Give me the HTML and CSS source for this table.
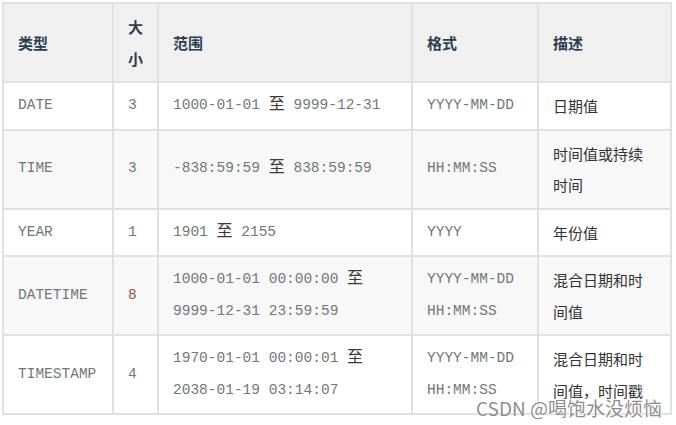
FILE: index.html
```html
<!DOCTYPE html>
<html lang="zh">
<head>
<meta charset="utf-8">
<link rel="stylesheet" href="styles.css">
</head>
<body>
<div class="page">
  <table class="types">
    <colgroup>
      <col class="c1"><col class="c2"><col class="c3"><col class="c4"><col class="c5">
    </colgroup>
    <thead>
      <tr><th>类型</th><th>大小</th><th>范围</th><th>格式</th><th>描述</th></tr>
    </thead>
    <tbody>
      <tr><td class="mono">DATE</td><td class="mono">3</td><td class="mono">1000-01-01 <span class="to">至</span> 9999-12-31</td><td class="mono">YYYY-MM-DD</td><td class="desc">日期值</td></tr>
      <tr><td class="mono">TIME</td><td class="mono">3</td><td class="mono">-838:59:59 <span class="to">至</span> 838:59:59</td><td class="mono">HH:MM:SS</td><td class="desc">时间值或持续时间</td></tr>
      <tr><td class="mono">YEAR</td><td class="mono">1</td><td class="mono">1901 <span class="to">至</span> 2155</td><td class="mono">YYYY</td><td class="desc">年份值</td></tr>
      <tr><td class="mono">DATETIME</td><td class="mono num">8</td><td class="mono">1000-01-01 00:00:00 <span class="to">至</span> 9999-12-31 23:59:59</td><td class="mono">YYYY-MM-DD HH:MM:SS</td><td class="desc">混合日期和时间值</td></tr>
      <tr><td class="mono">TIMESTAMP</td><td class="mono">4</td><td class="mono">1970-01-01 00:00:01 <span class="to">至</span> 2038-01-19 03:14:07</td><td class="mono">YYYY-MM-DD HH:MM:SS</td><td class="desc">混合日期和时间值，时间戳</td></tr>
    </tbody>
  </table>
  <div class="watermark">CSDN @喝饱水没烦恼</div>
</div>
</body>
</html>
```
FILE: styles.css
```css
html, body {
  margin: 0;
  padding: 0;
  background: #ffffff;
}
.page {
  position: relative;
  padding: 2px;
  width: 672px;
  height: 421px;
  overflow: hidden;
}
.types {
  border-collapse: collapse;
  table-layout: fixed;
  width: 670px;
  font-family: "Noto Sans CJK SC", "Noto Sans", sans-serif;
}
.c1 { width: 110px; }
.c2 { width: 45px; }
.c3 { width: 254px; }
.c4 { width: 126px; }
.c5 { width: 133px; }
.types th, .types td {
  border: 2px solid #dfe2e5;
  padding: 7px 14px;
  line-height: 31.5px;
  text-align: left;
  vertical-align: middle;
  word-break: break-all;
}
.types th {
  background: #f0f0f0;
  font-size: 15px;
  font-weight: bold;
  color: #2c3e50;
}
.types tbody tr:nth-child(even) td {
  background: #f8f8f8;
}
.types tbody tr:nth-child(odd) td {
  background: #ffffff;
}
.mono {
  font-family: "Liberation Mono", "Noto Sans CJK SC", monospace;
  font-size: 14.5px;
  color: #73777c;
  word-break: normal !important;
}
.to {
  font-family: "Noto Sans CJK SC", sans-serif;
  font-size: 16px;
  line-height: 0;
  color: #3a3a3a;
}
.num {
  color: #a0524a;
}
.desc {
  font-size: 15px;
  color: #333333;
}
.watermark {
  position: absolute;
  right: 14px;
  bottom: 6px;
  font-family: "Noto Sans CJK SC", "Noto Sans", sans-serif;
  font-size: 19px;
  color: rgba(120, 120, 120, 0.85);
  text-shadow: 0 0 2px #ffffff, 0 0 2px #ffffff;
  line-height: 22px;
}
```
